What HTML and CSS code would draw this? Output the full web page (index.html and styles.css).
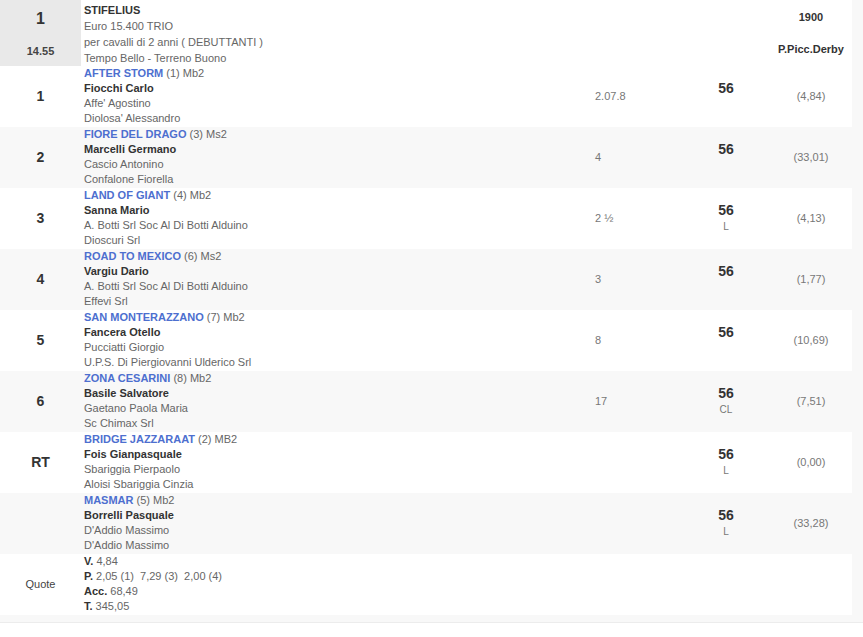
FILE: index.html
```html
<!DOCTYPE html>
<html>
<head>
<meta charset="utf-8">
<link rel="stylesheet" href="styles.css">
</head>
<body>
<div class="page">
<table class="race">
  <colgroup>
    <col class="c1"><col class="c2"><col class="c3"><col class="c4"><col class="c5">
  </colgroup>
  <tr class="head">
    <td class="pos headpos"><div class="big">1</div><div class="time">14.55</div></td>
    <td class="info headinfo"><b class="title">STIFELIUS</b><br>Euro 15.400 TRIO<br>per cavalli di 2 anni ( DEBUTTANTI )<br>Tempo Bello - Terreno Buono</td>
    <td></td>
    <td></td>
    <td class="meta"><div>1900</div><div>P.Picc.Derby</div></td>
  </tr>
  <tr class="w">
    <td class="pos">1</td>
    <td class="info"><span class="horse">AFTER STORM</span> (1) Mb2<br><b>Fiocchi Carlo</b><br>Affe' Agostino<br>Diolosa' Alessandro</td>
    <td class="dist">2.07.8</td>
    <td class="wt"><b>56</b><span class="sub">&nbsp;</span></td>
    <td class="odds">(4,84)</td>
  </tr>
  <tr class="g">
    <td class="pos">2</td>
    <td class="info"><span class="horse">FIORE DEL DRAGO</span> (3) Ms2<br><b>Marcelli Germano</b><br>Cascio Antonino<br>Confalone Fiorella</td>
    <td class="dist">4</td>
    <td class="wt"><b>56</b><span class="sub">&nbsp;</span></td>
    <td class="odds">(33,01)</td>
  </tr>
  <tr class="w">
    <td class="pos">3</td>
    <td class="info"><span class="horse">LAND OF GIANT</span> (4) Mb2<br><b>Sanna Mario</b><br>A. Botti Srl Soc Al Di Botti Alduino<br>Dioscuri Srl</td>
    <td class="dist">2 ½</td>
    <td class="wt"><b>56</b><span class="sub">L</span></td>
    <td class="odds">(4,13)</td>
  </tr>
  <tr class="g">
    <td class="pos">4</td>
    <td class="info"><span class="horse">ROAD TO MEXICO</span> (6) Ms2<br><b>Vargiu Dario</b><br>A. Botti Srl Soc Al Di Botti Alduino<br>Effevi Srl</td>
    <td class="dist">3</td>
    <td class="wt"><b>56</b><span class="sub">&nbsp;</span></td>
    <td class="odds">(1,77)</td>
  </tr>
  <tr class="w">
    <td class="pos">5</td>
    <td class="info"><span class="horse">SAN MONTERAZZANO</span> (7) Mb2<br><b>Fancera Otello</b><br>Pucciatti Giorgio<br>U.P.S. Di Piergiovanni Ulderico Srl</td>
    <td class="dist">8</td>
    <td class="wt"><b>56</b><span class="sub">&nbsp;</span></td>
    <td class="odds">(10,69)</td>
  </tr>
  <tr class="g">
    <td class="pos">6</td>
    <td class="info"><span class="horse">ZONA CESARINI</span> (8) Mb2<br><b>Basile Salvatore</b><br>Gaetano Paola Maria<br>Sc Chimax Srl</td>
    <td class="dist">17</td>
    <td class="wt"><b>56</b><span class="sub">CL</span></td>
    <td class="odds">(7,51)</td>
  </tr>
  <tr class="w">
    <td class="pos">RT</td>
    <td class="info"><span class="horse">BRIDGE JAZZARAAT</span> (2) MB2<br><b>Fois Gianpasquale</b><br>Sbariggia Pierpaolo<br>Aloisi Sbariggia Cinzia</td>
    <td class="dist"></td>
    <td class="wt"><b>56</b><span class="sub">L</span></td>
    <td class="odds">(0,00)</td>
  </tr>
  <tr class="g">
    <td class="pos"></td>
    <td class="info"><span class="horse">MASMAR</span> (5) Mb2<br><b>Borrelli Pasquale</b><br>D'Addio Massimo<br>D'Addio Massimo</td>
    <td class="dist"></td>
    <td class="wt"><b>56</b><span class="sub">L</span></td>
    <td class="odds">(33,28)</td>
  </tr>
  <tr class="w quote">
    <td class="pos quotelabel">Quote</td>
    <td class="info"><b>V.</b> 4,84<br><b>P.</b> 2,05 (1)&nbsp; 7,29 (3)&nbsp; 2,00 (4)<br><b>Acc.</b> 68,49<br><b>T.</b> 345,05</td>
    <td></td>
    <td></td>
    <td></td>
  </tr>
</table>
</div>
</body>
</html>
```

FILE: styles.css
```css
html, body {
  margin: 0;
  padding: 0;
  background: #ffffff;
}
body {
  font-family: "Liberation Sans", Arial, sans-serif;
  font-size: 11px;
  color: #666;
}
.page {
  background: #f8f8f8;
  padding: 0 11px 7px 0;
  border-bottom: 1px solid #ececec;
}
.race {
  width: 852px;
  border-collapse: collapse;
  table-layout: fixed;
}
.c1 { width: 81px; }
.c2 { width: 511px; }
.c3 { width: 90px; }
.c4 { width: 88px; }
.c5 { width: 82px; }
.race td {
  padding: 0 0 1px 0;
  line-height: 15px;
  vertical-align: middle;
}
.race tr.w td { background: #ffffff; }
.race tr.g td { background: #f8f8f8; }
.race tr.head td { background: #ffffff; height: 64px; padding: 0; }
.race td.pos {
  text-align: center;
  font-weight: bold;
  font-size: 14px;
  color: #333;
}
.race tr.head td.headpos {
  background: #e9e9e9;
  padding: 0;
  vertical-align: top;
}
.headpos .big {
  font-size: 16px;
  line-height: 18px;
  margin-top: 10px;
}
.headpos .time {
  font-size: 11px;
  line-height: 15px;
  margin-top: 16px;
  color: #444;
}
.race td.info {
  padding-left: 3px;
  color: #666;
  vertical-align: top;
}
.race tr.head td.headinfo {
  padding: 2px 0 0 3px;
  line-height: 16px;
}
.info b { color: #333; }
.title { color: #333; }
.horse {
  color: #4d6fcf;
  font-weight: bold;
}
.race td.dist {
  padding-left: 3px;
  color: #777;
}
.race td.wt {
  text-align: center;
  color: #333;
}
.wt b {
  display: block;
  font-size: 14px;
  line-height: 17px;
}
.wt .sub {
  display: block;
  font-size: 10px;
  line-height: 15px;
  color: #777;
}
.race td.odds {
  text-align: center;
  color: #777;
}
.race tr.head td.meta {
  text-align: center;
  font-weight: bold;
  color: #333;
  vertical-align: top;
}
.meta div:first-child { margin-top: 10px; }
.meta div:last-child { margin-top: 17px; }
.race td.quotelabel {
  background: #e9e9e9;
  font-size: 11px;
  font-weight: normal;
  color: #444;
}
```
